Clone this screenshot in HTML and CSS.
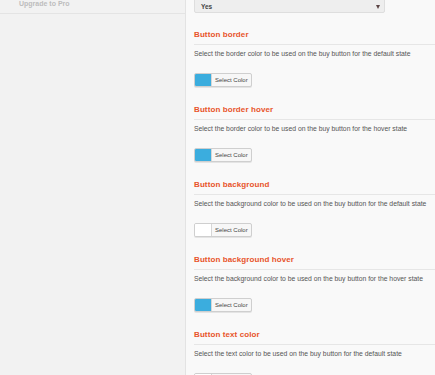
FILE: index.html
```html
<!DOCTYPE html>
<html lang="en">
<head>
    <meta charset="UTF-8">
    <title>Buy Button Settings</title>
    <link rel="stylesheet" href="styles.css">
</head>
<body>
    <div class="layout">
        <aside class="sidebar">
            <div class="menu-item">Upgrade to Pro</div>
        </aside>

        <main class="content">
            <div class="select-box">
                <span class="select-value">Yes</span>
                <span class="select-arrow"></span>
            </div>

            <section class="setting">
                <h3 class="setting-title">Button border</h3>
                <p class="setting-desc">Select the border color to be used on the buy button for the default state</p>
                <div class="color-btn">
                    <span class="swatch swatch-blue"></span>
                    <span class="color-label">Select Color</span>
                </div>
            </section>

            <section class="setting">
                <h3 class="setting-title">Button border hover</h3>
                <p class="setting-desc">Select the border color to be used on the buy button for the hover state</p>
                <div class="color-btn">
                    <span class="swatch swatch-blue"></span>
                    <span class="color-label">Select Color</span>
                </div>
            </section>

            <section class="setting">
                <h3 class="setting-title">Button background</h3>
                <p class="setting-desc">Select the background color to be used on the buy button for the default state</p>
                <div class="color-btn">
                    <span class="swatch swatch-white"></span>
                    <span class="color-label">Select Color</span>
                </div>
            </section>

            <section class="setting">
                <h3 class="setting-title">Button background hover</h3>
                <p class="setting-desc">Select the background color to be used on the buy button for the hover state</p>
                <div class="color-btn">
                    <span class="swatch swatch-blue"></span>
                    <span class="color-label">Select Color</span>
                </div>
            </section>

            <section class="setting">
                <h3 class="setting-title">Button text color</h3>
                <p class="setting-desc">Select the text color to be used on the buy button for the default state</p>
                <div class="color-btn">
                    <span class="swatch swatch-white"></span>
                    <span class="color-label">Select Color</span>
                </div>
            </section>
        </main>
    </div>
</body>
</html>
```

FILE: styles.css
```css
* {
    margin: 0;
    padding: 0;
    box-sizing: border-box;
}

html, body {
    height: 100%;
    overflow: hidden;
}

body {
    background: #f9f9f9;
    font-family: 'Liberation Sans', Arial, sans-serif;
    color: #555;
}

.layout {
    display: flex;
    min-height: 100%;
}

/* Menu lateral */
.sidebar {
    width: 186px;
    flex-shrink: 0;
    background: #f2f2f2;
    border-right: 1px solid #e3e3e3;
}

.menu-item {
    height: 15px;
    margin-top: -1px;
    padding-left: 19px;
    font-size: 7px;
    font-weight: bold;
    line-height: 10px;
    color: #bdbdbd;
    border-bottom: 1px solid #e4e4e4;
}

/* Contenu principal */
.content {
    flex: 1;
    padding-left: 8px;
}

.select-box {
    position: relative;
    width: 191px;
    height: 15px;
    margin-top: -2px;
    background: #eeeeee;
    border: 1px solid #dedede;
    border-radius: 2px;
    padding-left: 6px;
    font-size: 6.5px;
    font-weight: bold;
    line-height: 16px;
    color: #444;
}

.select-arrow {
    position: absolute;
    right: 4px;
    top: 6px;
    border-left: 2.5px solid transparent;
    border-right: 2.5px solid transparent;
    border-top: 4px solid #5b4444;
}

.setting {
    padding-top: 17px;
}

.setting + .setting {
    padding-top: 18px;
}

.setting-title {
    font-size: 8px;
    font-weight: bold;
    line-height: 10px;
    color: #e8542b;
    letter-spacing: 0.1px;
    padding-bottom: 4px;
    border-bottom: 1px solid #e6e6e6;
}

.setting-desc {
    margin-top: 4px;
    font-size: 6.8px;
    line-height: 10px;
    color: #555;
    white-space: nowrap;
}

/* Bouton couleur */
.color-btn {
    display: flex;
    width: 58px;
    height: 14px;
    margin-top: 14px;
    background: #f7f7f7;
    border: 1px solid #cfcfcf;
    border-radius: 2px;
    box-shadow: 0 1px 0 #e4e4e4;
    overflow: hidden;
}

.swatch {
    width: 17px;
    height: 100%;
    border-right: 1px solid #d6d6d6;
}

.swatch-blue {
    background: #3badde;
}

.swatch-white {
    background: #ffffff;
}

.color-label {
    padding-left: 3px;
    font-size: 6px;
    line-height: 12px;
    color: #444;
    white-space: nowrap;
}
```
